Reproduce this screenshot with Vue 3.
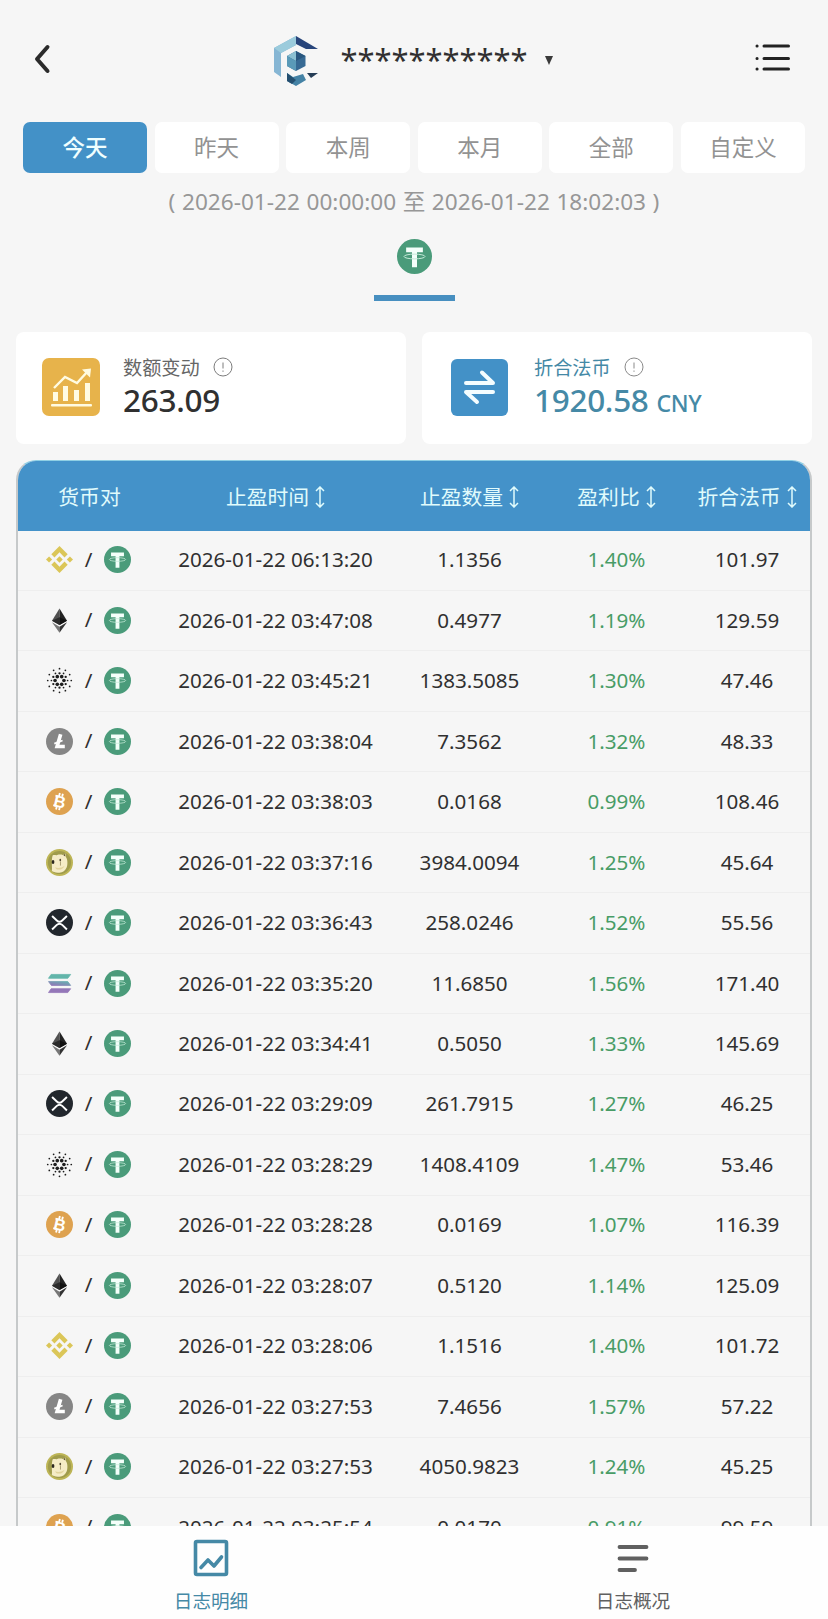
<script setup>
import { ref } from 'vue'

const tabs = ['今天', '昨天', '本周', '本月', '全部', '自定义']
const activeTab = ref(0)
const activeNav = ref('detail')

const columns = [
  { title: '货币对', sort: false },
  { title: '止盈时间', sort: true },
  { title: '止盈数量', sort: true },
  { title: '盈利比', sort: true },
  { title: '折合法币', sort: true },
]

const rows = [
  { coin: 'bnb', time: '2026-01-22 06:13:20', amount: '1.1356', rate: '1.40%', fiat: '101.97' },
  { coin: 'eth', time: '2026-01-22 03:47:08', amount: '0.4977', rate: '1.19%', fiat: '129.59' },
  { coin: 'ada', time: '2026-01-22 03:45:21', amount: '1383.5085', rate: '1.30%', fiat: '47.46' },
  { coin: 'ltc', time: '2026-01-22 03:38:04', amount: '7.3562', rate: '1.32%', fiat: '48.33' },
  { coin: 'btc', time: '2026-01-22 03:38:03', amount: '0.0168', rate: '0.99%', fiat: '108.46' },
  { coin: 'doge', time: '2026-01-22 03:37:16', amount: '3984.0094', rate: '1.25%', fiat: '45.64' },
  { coin: 'xrp', time: '2026-01-22 03:36:43', amount: '258.0246', rate: '1.52%', fiat: '55.56' },
  { coin: 'sol', time: '2026-01-22 03:35:20', amount: '11.6850', rate: '1.56%', fiat: '171.40' },
  { coin: 'eth', time: '2026-01-22 03:34:41', amount: '0.5050', rate: '1.33%', fiat: '145.69' },
  { coin: 'xrp', time: '2026-01-22 03:29:09', amount: '261.7915', rate: '1.27%', fiat: '46.25' },
  { coin: 'ada', time: '2026-01-22 03:28:29', amount: '1408.4109', rate: '1.47%', fiat: '53.46' },
  { coin: 'btc', time: '2026-01-22 03:28:28', amount: '0.0169', rate: '1.07%', fiat: '116.39' },
  { coin: 'eth', time: '2026-01-22 03:28:07', amount: '0.5120', rate: '1.14%', fiat: '125.09' },
  { coin: 'bnb', time: '2026-01-22 03:28:06', amount: '1.1516', rate: '1.40%', fiat: '101.72' },
  { coin: 'ltc', time: '2026-01-22 03:27:53', amount: '7.4656', rate: '1.57%', fiat: '57.22' },
  { coin: 'doge', time: '2026-01-22 03:27:53', amount: '4050.9823', rate: '1.24%', fiat: '45.25' },
  { coin: 'btc', time: '2026-01-22 03:25:54', amount: '0.0170', rate: '0.91%', fiat: '99.59' },
]

// ADA 图标的圆点：[半径, 点大小, 数量, 起始角]
const adaRings = [
  [4.6, 1.9, 6, 0],
  [7.4, 1.2, 6, 30],
  [8.4, 0.9, 6, 0],
  [12.2, 0.9, 12, 0],
]
const adaDots = adaRings.flatMap(([r, size, count, start]) =>
  Array.from({ length: count }, (_, i) => {
    const a = ((start + (360 / count) * i) * Math.PI) / 180
    return { x: 14 + r * Math.cos(a), y: 14 + r * Math.sin(a), size }
  })
)
</script>

<template>
  <div class="page">
    <svg class="sprite" width="0" height="0">
      <symbol id="usdt" viewBox="0 0 28 28">
        <circle cx="14" cy="14" r="14" fill="#4a9b7a" />
        <path d="M7.3 6.8h13.4v3.7h-4.7v12h-4v-12H7.300z" fill="#f4fffa" />
        <ellipse cx="14" cy="14" rx="8.4" ry="1.9" fill="none" stroke="#c4ead8" stroke-width="0.8" />
      </symbol>
      <symbol id="bnb" viewBox="0 0 28 28">
        <g fill="#dbc658">
          <path d="M14 0l8.500 8.500-3.300 3.300L14 6.600l-5.200 5.200-3.300-3.300z" />
          <path d="M14 28l8.500-8.500-3.300-3.300-5.200 5.200-5.200-5.200-3.300 3.300z" />
          <path d="M3.200 10.800L6.400 14l-3.200 3.200L0 14z" />
          <path d="M24.800 10.800L28 14l-3.200 3.200-3.200-3.200z" />
          <path d="M14 10.600l3.400 3.400-3.400 3.400-3.400-3.400z" />
        </g>
      </symbol>
      <symbol id="eth" viewBox="0 0 28 28">
        <path d="M14 1.500L6.200 14.200 14 18.600z" fill="#505050" />
        <path d="M14 1.500l7.800 12.700-7.800 4.400z" fill="#222" />
        <path d="M14 10.700l-7.800 3.500 7.800 4.400z" fill="#2b2b2b" />
        <path d="M14 10.700l7.800 3.500-7.800 4.400z" fill="#111" />
        <path d="M6.200 15.800L14 26.700v-6.300z" fill="#777" />
        <path d="M21.800 15.800L14 26.700v-6.300z" fill="#333" />
      </symbol>
      <symbol id="ada" viewBox="0 0 28 28">
        <circle v-for="(d, i) in adaDots" :key="i" :cx="d.x" :cy="d.y" :r="d.size" fill="#1d1d1d" />
      </symbol>
      <symbol id="ltc" viewBox="0 0 28 28">
        <circle cx="14" cy="14" r="14" fill="#868686" />
        <path d="M15.200 6.500l-3.700 12.700h8" fill="none" stroke="#fff" stroke-width="3.800" />
        <path d="M8.600 16.200l8.600-3.300" stroke="#fff" stroke-width="1.800" />
      </symbol>
      <symbol id="btc" viewBox="0 0 28 28">
        <circle cx="14" cy="14" r="14" fill="#dea250" />
        <g transform="rotate(13 14 14)">
          <text x="14.4" y="20" text-anchor="middle" class="btc-letter">B</text>
          <path d="M12.400 5.400v3.200M15.600 5.400v3.200M12.400 19.600v3.200M15.600 19.600v3.200M8.600 9h3M8.600 19.100h3" stroke="#fff" stroke-width="1.900" />
        </g>
      </symbol>
      <symbol id="doge" viewBox="0 0 28 28">
        <circle cx="14" cy="14" r="14" fill="#bdb556" />
        <circle cx="14" cy="14" r="12" fill="#a09c4c" />
        <path d="M7 6.500c2.200-.6 3.300.2 4.600-.3 2-.8 4.300-.6 5.800-.1l2.700-1.500.5 3.600c2 2.400 2 8 .9 10.800-1.500 3.600-4.200 5.600-7.800 5.500-3.600.4-6.500-.7-7.700-1.600.6-3.400-.2-5.700.2-8.700-.3-3 .1-5.600.8-7.700z" fill="#f5ecc6" />
        <path d="M9.500 18.800c2.500 1.400 6.500 1 9.800-1.500-1.400 3.400-4 4.300-6.800 4-1.500-.2-2.500-1-3-2.500z" fill="#e2d49c" />
        <ellipse cx="7.300" cy="13.500" rx="1.400" ry="2.100" fill="#2c281f" />
        <ellipse cx="14.800" cy="11.500" rx="0.900" ry="1.500" fill="#554b34" />
        <path d="M15 13.200v4" stroke="#a99d71" stroke-width="1" />
        <path d="M17.800 6.300l1.900-1 .3 2.600z" fill="#5b4f28" />
      </symbol>
      <symbol id="xrp" viewBox="0 0 28 28">
        <circle cx="14" cy="14" r="14" fill="#22272d" />
        <g fill="none" stroke="#fff" stroke-width="2">
          <path d="M6.300 7.200l4.900 4.700c1.600 1.500 4 1.500 5.600 0l4.900-4.700" />
          <path d="M6.300 21.300l4.900-4.800c1.600-1.500 4-1.500 5.600 0l4.900 4.800" />
        </g>
      </symbol>
      <symbol id="sol" viewBox="0 0 28 28">
        <linearGradient id="solGrad" x1="0" y1="1" x2="1" y2="0">
          <stop offset="0" stop-color="#9571b8" />
          <stop offset="1" stop-color="#64b4b0" />
        </linearGradient>
        <g stroke-width="0.8" stroke-linejoin="round">
          <path d="M5.300 4.600h20.300l-3 4h-20z" fill="#62b5aa" stroke="#62b5aa" />
          <path d="M2.600 12h20l3 4h-20z" fill="url(#solGrad)" stroke="url(#solGrad)" />
          <path d="M5.300 19.400h20.300l-3 4h-20z" fill="#9477b8" stroke="#9477b8" />
        </g>
      </symbol>
    </svg>

    <header class="header">
      <svg class="back" width="18" height="32" viewBox="0 0 18 32">
        <path d="M14.500 4L4 16l10.500 12" fill="none" stroke="#2b2b2b" stroke-width="4" stroke-linecap="round" stroke-linejoin="round" />
      </svg>
      <div class="account">
        <svg class="logo" width="46" height="52" viewBox="0 0 46 52">
          <path d="M1 13L23 1v9L8 18v24l-7-5z" fill="#86b6d4" />
          <path d="M1 13L23 1v9L8 18z" fill="#9bcbdc" />
          <path d="M23 1l22 13H33l-10-5z" fill="#28457b" />
          <path d="M23 16l9.500 5v10L23 36l-9-5V21z" fill="#376a94" />
          <path d="M23 16l-9 5 9 5z" fill="#8bc0d2" />
          <path d="M14 21l9 5v10l-9-5z" fill="#5a9ab8" />
          <path d="M23 16l9.500 5L23 26z" fill="#29577f" />
          <path d="M14 38l6 4 10-3 3 6-10 6-9-5z" fill="#4482a5" />
          <path d="M14 38l9 7-4 4-5-3z" fill="#244f70" />
          <path d="M34 38h11l-7 5z" fill="#253c55" />
        </svg>
        <span class="name">***********</span>
        <i class="caret"></i>
      </div>
      <svg class="menu" width="36" height="32" viewBox="0 0 36 32" stroke="#222" stroke-width="3" stroke-linecap="round">
        <path d="M9 5h24.500M9 17.500h24.500M9 28h24.500M2 5h.1M2 17.500h.1M2 28h.1" />
      </svg>
    </header>

    <div class="tabs">
      <button v-for="(tab, i) in tabs" :key="tab" :class="['tab', { active: activeTab === i }]" @click="activeTab = i">{{ tab }}</button>
    </div>

    <div class="range">( 2026-01-22 00:00:00 至 2026-01-22 18:02:03 )</div>

    <div class="coin-tab">
      <svg width="35" height="35"><use href="#usdt" /></svg>
    </div>

    <div class="cards">
      <div class="card">
        <svg class="card-icon" width="58" height="58" viewBox="0 0 58 58">
          <rect width="58" height="58" rx="7" fill="#e7b34b" />
          <g fill="#fffbe2">
            <rect x="11" y="34" width="5" height="9" />
            <rect x="21" y="28" width="5" height="15" />
            <rect x="32" y="32" width="5" height="11" />
            <rect x="43" y="25" width="5" height="18" />
            <rect x="9" y="46" width="41" height="2.600" rx="1" />
            <path d="M40 11.500l9-1-1 9z" />
          </g>
          <path d="M12 30l11-11 12 6 11-12" fill="none" stroke="#fffbe2" stroke-width="2.400" />
        </svg>
        <div class="card-text">
          <div class="label">
            数额变动
            <svg class="info" width="20" height="20" viewBox="0 0 20 20" fill="none" stroke="#7c7c7c">
              <circle cx="10" cy="10" r="9" />
              <path d="M10 5.500v6M10 13.500v1.300" />
            </svg>
          </div>
          <div class="value">263.09</div>
        </div>
      </div>
      <div class="card blue">
        <svg class="card-icon" width="57" height="57" viewBox="0 0 57 57">
          <rect width="57" height="57" rx="6" fill="#4391c7" />
          <path d="M15 24h27L31 13.500M42 33H15l11 10" fill="none" stroke="#f4fdff" stroke-width="4" stroke-linecap="round" stroke-linejoin="round" />
        </svg>
        <div class="card-text">
          <div class="label">
            折合法币
            <svg class="info" width="20" height="20" viewBox="0 0 20 20" fill="none" stroke="#8a8a8a">
              <circle cx="10" cy="10" r="9" />
              <path d="M10 5.500v6M10 13.500v1.300" />
            </svg>
          </div>
          <div class="value">1920.58 <small>CNY</small></div>
        </div>
      </div>
    </div>

    <div class="table">
      <div class="row head">
        <div v-for="col in columns" :key="col.title" class="cell">
          {{ col.title }}
          <svg v-if="col.sort" class="sort" width="10" height="22" viewBox="0 0 10 22">
            <path d="M5 1.500v19M1 5l4-4 4 4M1 17l4 4 4-4" fill="none" stroke="#e0fbfc" stroke-width="1.500" />
          </svg>
        </div>
      </div>
      <div v-for="(row, i) in rows" :key="i" class="row">
        <div class="cell pair">
          <svg width="27" height="27"><use :href="'#' + row.coin" /></svg>
          <span>/</span>
          <svg width="27" height="27"><use href="#usdt" /></svg>
        </div>
        <div class="cell">{{ row.time }}</div>
        <div class="cell">{{ row.amount }}</div>
        <div class="cell rate">{{ row.rate }}</div>
        <div class="cell">{{ row.fiat }}</div>
      </div>
    </div>

    <nav class="nav">
      <div :class="['nav-item', { active: activeNav === 'detail' }]" @click="activeNav = 'detail'">
        <svg width="36" height="38" viewBox="0 0 36 38" fill="none" stroke="currentColor" stroke-width="3.600" stroke-linejoin="round">
          <rect x="2.500" y="2.500" width="31" height="33" rx="1.500" />
          <path d="M8 28.500l7-7.500 6 6L28.500 18" stroke-linecap="round" />
        </svg>
        <span>日志明细</span>
      </div>
      <div :class="['nav-item', { active: activeNav === 'summary' }]" @click="activeNav = 'summary'">
        <svg width="36" height="38" viewBox="0 0 36 38" stroke="currentColor" stroke-width="3.800" stroke-linecap="round">
          <path d="M4.500 8h27M4.500 19.500h27M4.500 31h15.500" />
        </svg>
        <span>日志概况</span>
      </div>
    </nav>
  </div>
</template>

<style>
body {
  margin: 0;
  background: #f6f6f6;
}
</style>

<style scoped>
.page {
  display: flex;
  flex-direction: column;
  width: 828px;
  height: 1619px;
  overflow: hidden;
  background: #f6f6f6;
  color: #303030;
  font-family: "Noto Sans", "Noto Sans CJK SC", sans-serif;
}

.sprite {
  position: absolute;
}

.btc-letter {
  font: bold 17px "Liberation Sans", sans-serif;
  fill: #fff;
}

.header {
  display: flex;
  align-items: center;
  justify-content: space-between;
  flex: none;
  height: 116px;
  margin-bottom: 6px;
  padding: 0 37px 0 33px;
}

.back {
  margin-top: 1px;
}

.account {
  display: flex;
  align-items: center;
  margin-left: 20px;
  padding-top: 5px;
}

.name {
  margin: -4px 0 0 21px;
  height: 42px;
  line-height: 42px;
  font-size: 30.900px;
}

.caret {
  margin: 0 0 0 17px;
  border: 4.500px solid transparent;
  border-top: 9px solid #3a3a3a;
  border-bottom: 0;
}

.menu {
  margin-top: -2px;
}

.tabs {
  display: grid;
  grid-template-columns: repeat(6, 1fr);
  gap: 7.500px;
  flex: none;
  height: 51px;
  padding: 0 23px;
}

.tab {
  padding: 0 0 3px;
  border: none;
  border-radius: 7px;
  background: #fff;
  color: #929292;
  font-family: inherit;
  font-size: 22.500px;
  cursor: pointer;
}

.tab.active {
  background: #4391c7;
  color: #f0ffff;
  font-weight: 500;
}

.range {
  flex: none;
  height: 58px;
  line-height: 58px;
  text-align: center;
  color: #979797;
  font-size: 22.600px;
  word-spacing: 0.700px;
}

.coin-tab {
  flex: none;
  align-self: center;
  display: flex;
  justify-content: center;
  box-sizing: border-box;
  width: 81px;
  height: 70px;
  padding-top: 8px;
  border-bottom: 6px solid #478fc0;
}

.cards {
  display: grid;
  grid-template-columns: 1fr 1fr;
  gap: 16px;
  flex: none;
  margin: 31px 16px 16px;
}

.card {
  display: flex;
  align-items: center;
  box-sizing: border-box;
  height: 112px;
  padding: 0 0 2px 26px;
  border-radius: 8px;
  background: #fff;
}

.card.blue {
  padding-left: 29px;
}

.card-text {
  margin-left: 23px;
}

.card.blue .card-text {
  margin-left: 26px;
}

.label {
  display: flex;
  align-items: center;
  height: 26px;
  color: #666;
  font-size: 19.200px;
}

.info {
  margin-left: 13px;
}

.value {
  height: 40px;
  line-height: 40px;
  font-size: 31.500px;
  letter-spacing: -0.300px;
  font-weight: 500;
}

.value small {
  font-size: 23px;
}

.blue .label,
.blue .value {
  color: #4589a6;
}

.table {
  flex: 1;
  min-height: 0;
  box-sizing: border-box;
  margin: 0 16px;
  overflow: hidden;
  border: 2px solid #c6c9ca;
  border-top: 1px solid #8fcfe4;
  border-bottom: none;
  border-radius: 20px 20px 0 0;
}

.row {
  display: grid;
  grid-template-columns: 143px 229px 159px 135px 1fr;
  box-sizing: border-box;
  height: 60.470px;
  border-bottom: 1px solid #eee;
  font-size: 20.600px;
}

.row.head {
  height: 69.500px;
  border: none;
  background: #4492c9;
  color: #e0fbfc;
  font-size: 20.800px;
}

.cell {
  display: flex;
  align-items: center;
  justify-content: center;
  padding-bottom: 2px;
  white-space: nowrap;
}

.head .cell {
  padding-bottom: 0;
}

.sort {
  margin: 3px 0 0 6px;
}

.pair {
  gap: 12px;
  padding: 0 2px 1px 0;
}

.pair span {
  margin-top: -2px;
}

.rate {
  color: #489c66;
}

.nav {
  display: grid;
  grid-template-columns: 422px 422px;
  flex: none;
  height: 93px;
  background: #fefefe;
}

.nav-item {
  display: flex;
  flex-direction: column;
  align-items: center;
  padding-top: 13px;
  color: #606060;
  font-size: 18.600px;
  cursor: pointer;
}

.nav-item span {
  margin-top: 10px;
  line-height: 28px;
}

.nav-item.active {
  color: #4589a6;
}
</style>
